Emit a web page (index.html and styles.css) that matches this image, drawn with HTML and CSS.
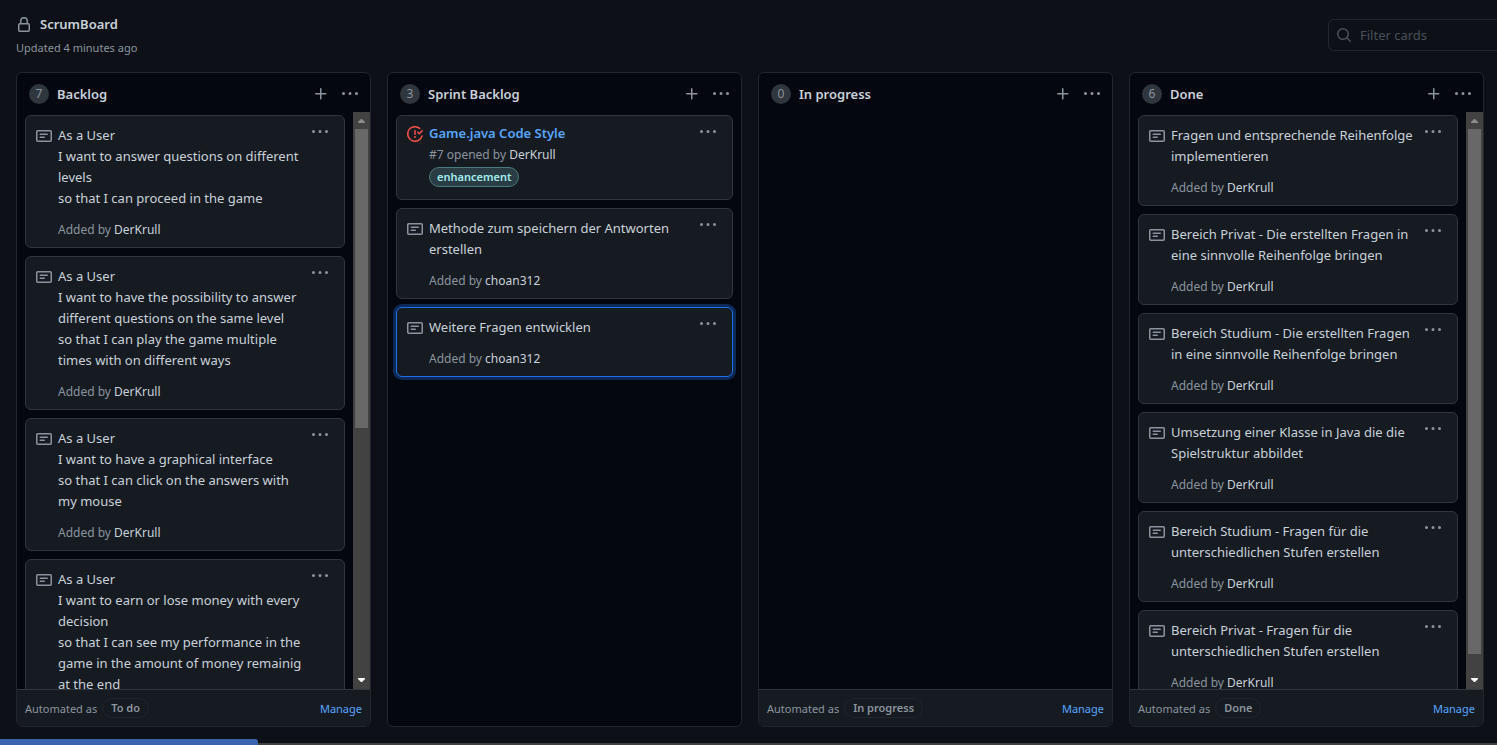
FILE: index.html
```html
<!DOCTYPE html>
<html lang="en">
<head>
<meta charset="utf-8">
<title>ScrumBoard</title>
<link rel="stylesheet" href="styles.css">
</head>
<body>
<svg class="sprite" aria-hidden="true">
  <symbol id="note" viewBox="0 0 16 16"><path fill-rule="evenodd" d="M0 3.75C0 2.784.784 2 1.75 2h12.5c.966 0 1.75.784 1.75 1.75v8.5A1.75 1.75 0 0114.25 14H1.75A1.75 1.75 0 010 12.25v-8.5zm1.75-.25a.25.25 0 00-.25.25v8.5c0 .138.112.25.25.25h12.5a.25.25 0 00.25-.25v-8.5a.25.25 0 00-.25-.25H1.75zM3.5 6.25a.75.75 0 01.75-.75h7a.75.75 0 010 1.5h-7a.75.75 0 01-.75-.75zm.75 2.25a.75.75 0 000 1.5h4a.75.75 0 000-1.5h-4z"/></symbol>
  <symbol id="dots" viewBox="0 0 16 16"><path d="M8 9a1.5 1.5 0 100-3 1.5 1.5 0 000 3zM1.5 9a1.5 1.5 0 100-3 1.5 1.5 0 000 3zm13 0a1.5 1.5 0 100-3 1.5 1.5 0 000 3z"/></symbol>
  <symbol id="plus" viewBox="0 0 16 16"><path d="M7.75 2a.75.75 0 01.75.75V7h4.25a.75.75 0 110 1.5H8.5v4.25a.75.75 0 11-1.5 0V8.5H2.75a.75.75 0 010-1.5H7V2.75A.75.75 0 017.75 2z"/></symbol>
  <symbol id="lock" viewBox="0 0 16 16"><path fill-rule="evenodd" d="M4 4v2h-.25A1.75 1.75 0 002 7.75v5.5c0 .966.784 1.75 1.75 1.75h8.5A1.75 1.75 0 0014 13.25v-5.5A1.75 1.75 0 0012.25 6H12V4a4 4 0 10-8 0zm6.5 2V4a2.5 2.5 0 10-5 0v2h5zM12 7.5h.25a.25.25 0 01.25.25v5.5a.25.25 0 01-.25.25h-8.5a.25.25 0 01-.25-.25v-5.5a.25.25 0 01.25-.25H12z"/></symbol>
  <symbol id="search" viewBox="0 0 16 16"><path fill-rule="evenodd" d="M11.5 7a4.499 4.499 0 11-8.998 0A4.499 4.499 0 0111.5 7zm-.82 4.74a6 6 0 111.06-1.06l3.04 3.04a.75.75 0 11-1.06 1.06l-3.04-3.04z"/></symbol>
  <symbol id="issue" viewBox="0 0 16 16"><path d="M1.5 8a6.5 6.5 0 0110.65-5.003.75.75 0 00.959-1.153 8 8 0 102.592 8.33.75.75 0 10-1.444-.407A6.5 6.5 0 011.5 8zM8 12a1 1 0 100-2 1 1 0 000 2zm0-8a.75.75 0 01.75.75v3.5a.75.75 0 11-1.5 0v-3.5A.75.75 0 018 4zm4.78 4.28l3-3a.75.75 0 00-1.06-1.06l-2.47 2.47-.97-.97a.749.749 0 10-1.06 1.06l1.5 1.5a.75.75 0 001.06 0z"/></symbol>
  <symbol id="up" viewBox="0 0 17 17"><path d="M5 11h7V10l-3-3H8L5 10z"/></symbol>
  <symbol id="down" viewBox="0 0 17 17"><path d="M5 6h7v1L9 10H8L5 7z"/></symbol>
</svg>

<header class="top">
  <div class="project">
    <h1 class="project-name"><svg class="icon"><use href="#lock"/></svg>ScrumBoard</h1>
    <p class="updated">Updated 4 minutes ago</p>
  </div>
  <label class="search"><svg class="icon"><use href="#search"/></svg><input class="search-input" type="text" placeholder="Filter cards" aria-label="Filter cards"></label>
</header>

<main class="board">
  <section class="column">
    <header class="column-head"><span class="count">7</span><h2 class="column-title">Backlog</h2>
      <button class="icon-button" aria-label="Add a note"><svg class="icon"><use href="#plus"/></svg></button>
      <button class="icon-button" aria-label="Column menu"><svg class="icon"><use href="#dots"/></svg></button></header>
    <div class="column-body">
      <div class="cards">
        <article class="card"><svg class="icon"><use href="#note"/></svg><div class="content"><p class="note">As a User<br>I want to answer questions on different<br>levels<br>so that I can proceed in the game</p><p class="meta">Added by <a class="user" href="#">DerKrull</a></p></div><button class="icon-button" aria-label="Card menu"><svg class="icon"><use href="#dots"/></svg></button></article>
        <article class="card"><svg class="icon"><use href="#note"/></svg><div class="content"><p class="note">As a User<br>I want to have the possibility to answer<br>different questions on the same level<br>so that I can play the game multiple<br>times with on different ways</p><p class="meta">Added by <a class="user" href="#">DerKrull</a></p></div><button class="icon-button" aria-label="Card menu"><svg class="icon"><use href="#dots"/></svg></button></article>
        <article class="card"><svg class="icon"><use href="#note"/></svg><div class="content"><p class="note">As a User<br>I want to have a graphical interface<br>so that I can click on the answers with<br>my mouse</p><p class="meta">Added by <a class="user" href="#">DerKrull</a></p></div><button class="icon-button" aria-label="Card menu"><svg class="icon"><use href="#dots"/></svg></button></article>
        <article class="card"><svg class="icon"><use href="#note"/></svg><div class="content"><p class="note">As a User<br>I want to earn or lose money with every<br>decision<br>so that I can see my performance in the<br>game in the amount of money remainig<br>at the end</p></div><button class="icon-button" aria-label="Card menu"><svg class="icon"><use href="#dots"/></svg></button></article>
      </div>
      <div class="scrollbar"><svg class="arrow arrow-off"><use href="#up"/></svg><div class="track"><div class="thumb" style="height:55%"></div></div><svg class="arrow"><use href="#down"/></svg></div>
    </div>
    <footer class="column-foot"><span>Automated as</span><span class="pill">To do</span><a class="manage" href="#">Manage</a></footer>
  </section>

  <section class="column">
    <header class="column-head"><span class="count">3</span><h2 class="column-title">Sprint Backlog</h2>
      <button class="icon-button" aria-label="Add a note"><svg class="icon"><use href="#plus"/></svg></button>
      <button class="icon-button" aria-label="Column menu"><svg class="icon"><use href="#dots"/></svg></button></header>
    <div class="column-body">
      <div class="cards">
        <article class="card card-issue"><svg class="icon icon-closed"><use href="#issue"/></svg><div class="content"><a class="issue-title" href="#">Game.java Code Style</a><p class="issue-meta">#7 opened by <a class="user" href="#">DerKrull</a></p><span class="label">enhancement</span></div><button class="icon-button" aria-label="Card menu"><svg class="icon"><use href="#dots"/></svg></button></article>
        <article class="card"><svg class="icon"><use href="#note"/></svg><div class="content"><p class="note">Methode zum speichern der Antworten<br>erstellen</p><p class="meta">Added by <a class="user" href="#">choan312</a></p></div><button class="icon-button" aria-label="Card menu"><svg class="icon"><use href="#dots"/></svg></button></article>
        <article class="card card-focus"><svg class="icon"><use href="#note"/></svg><div class="content"><p class="note">Weitere Fragen entwicklen</p><p class="meta">Added by <a class="user" href="#">choan312</a></p></div><button class="icon-button" aria-label="Card menu"><svg class="icon"><use href="#dots"/></svg></button></article>
      </div>
    </div>
  </section>

  <section class="column">
    <header class="column-head"><span class="count">0</span><h2 class="column-title">In progress</h2>
      <button class="icon-button" aria-label="Add a note"><svg class="icon"><use href="#plus"/></svg></button>
      <button class="icon-button" aria-label="Column menu"><svg class="icon"><use href="#dots"/></svg></button></header>
    <div class="column-body"></div>
    <footer class="column-foot"><span>Automated as</span><span class="pill">In progress</span><a class="manage" href="#">Manage</a></footer>
  </section>

  <section class="column">
    <header class="column-head"><span class="count">6</span><h2 class="column-title">Done</h2>
      <button class="icon-button" aria-label="Add a note"><svg class="icon"><use href="#plus"/></svg></button>
      <button class="icon-button" aria-label="Column menu"><svg class="icon"><use href="#dots"/></svg></button></header>
    <div class="column-body">
      <div class="cards">
        <article class="card"><svg class="icon"><use href="#note"/></svg><div class="content"><p class="note">Fragen und entsprechende Reihenfolge<br>implementieren</p><p class="meta">Added by <a class="user" href="#">DerKrull</a></p></div><button class="icon-button" aria-label="Card menu"><svg class="icon"><use href="#dots"/></svg></button></article>
        <article class="card"><svg class="icon"><use href="#note"/></svg><div class="content"><p class="note">Bereich Privat - Die erstellten Fragen in<br>eine sinnvolle Reihenfolge bringen</p><p class="meta">Added by <a class="user" href="#">DerKrull</a></p></div><button class="icon-button" aria-label="Card menu"><svg class="icon"><use href="#dots"/></svg></button></article>
        <article class="card"><svg class="icon"><use href="#note"/></svg><div class="content"><p class="note">Bereich Studium - Die erstellten Fragen<br>in eine sinnvolle Reihenfolge bringen</p><p class="meta">Added by <a class="user" href="#">DerKrull</a></p></div><button class="icon-button" aria-label="Card menu"><svg class="icon"><use href="#dots"/></svg></button></article>
        <article class="card"><svg class="icon"><use href="#note"/></svg><div class="content"><p class="note">Umsetzung einer Klasse in Java die die<br>Spielstruktur abbildet</p><p class="meta">Added by <a class="user" href="#">DerKrull</a></p></div><button class="icon-button" aria-label="Card menu"><svg class="icon"><use href="#dots"/></svg></button></article>
        <article class="card"><svg class="icon"><use href="#note"/></svg><div class="content"><p class="note">Bereich Studium - Fragen für die<br>unterschiedlichen Stufen erstellen</p><p class="meta">Added by <a class="user" href="#">DerKrull</a></p></div><button class="icon-button" aria-label="Card menu"><svg class="icon"><use href="#dots"/></svg></button></article>
        <article class="card"><svg class="icon"><use href="#note"/></svg><div class="content"><p class="note">Bereich Privat - Fragen für die<br>unterschiedlichen Stufen erstellen</p><p class="meta">Added by <a class="user" href="#">DerKrull</a></p></div><button class="icon-button" aria-label="Card menu"><svg class="icon"><use href="#dots"/></svg></button></article>
      </div>
      <div class="scrollbar"><svg class="arrow arrow-off"><use href="#up"/></svg><div class="track"><div class="thumb" style="height:96.7%"></div></div><svg class="arrow"><use href="#down"/></svg></div>
    </div>
    <footer class="column-foot"><span>Automated as</span><span class="pill">Done</span><a class="manage" href="#">Manage</a></footer>
  </section>
</main>

<div class="bottom-bar"><div class="bottom-fill"></div><div class="bottom-track"></div></div>
</body>
</html>
```

FILE: styles.css
```css
* { box-sizing: border-box; }
body {
  margin: 0;
  height: 100vh;
  display: flex;
  flex-direction: column;
  overflow: hidden;
  background: #0d1117;
  color: #c9d1d9;
  font: 13px/21px "Noto Sans", "Open Sans", sans-serif;
}
h1, h2, p { margin: 0; }
a { color: #58a6ff; text-decoration: none; }
.sprite { display: none; }
.icon { width: 16px; height: 16px; flex: none; display: block; fill: #8b949e; }
.icon-button { flex: none; padding: 0; border: 0; background: none; }

.top { flex: none; height: 72px; display: flex; justify-content: space-between; align-items: flex-start; padding-left: 16px; }
.project { padding-top: 14px; }
.project-name { display: flex; align-items: center; gap: 8px; font-size: 13px; font-weight: 600; line-height: 21px; }
.updated { margin-top: 3px; font-size: 11px; line-height: 20px; color: #8b949e; }
.search {
  margin-top: 19px;
  width: 169px;
  height: 32px;
  display: flex;
  align-items: center;
  gap: 8px;
  padding-left: 7px;
  border: 1px solid #21262d;
  border-right: 0;
  border-radius: 6px 0 0 6px;
}
.search .icon { fill: #484f58; }
.search-input { flex: 1; min-width: 0; padding: 0; border: 0; outline: 0; background: none; color: #c9d1d9; font: inherit; }
.search-input::placeholder { color: #484f58; opacity: 1; }

.board { flex: 1; min-height: 0; display: grid; grid-template-columns: repeat(4, 1fr); gap: 16px; padding: 0 13px 12px 16px; }
.column {
  min-width: 0;
  min-height: 0;
  display: flex;
  flex-direction: column;
  overflow: hidden;
  background: #05070f;
  border: 1px solid #21262d;
  border-radius: 6px;
}
.column-head { flex: none; height: 39px; display: flex; align-items: center; padding: 2px 12px 0; }
.column-head .icon-button { margin-left: 13px; }
.count { width: 20px; height: 20px; border-radius: 50%; background: #30363d; color: #8b949e; font-size: 12px; line-height: 20px; text-align: center; }
.column-title { flex: 1; padding: 2px 0 0 8px; font-size: 13px; font-weight: 600; }
.column-body { flex: 1; min-height: 0; display: flex; overflow: hidden; }
.cards { flex: 1; min-width: 0; display: flex; flex-direction: column; gap: 8px; padding: 3px 8px 0; }

.card { flex: none; display: flex; align-items: flex-start; padding: 8px 16px 7px 10px; background: #161b22; border: 1px solid #30363d; border-radius: 6px; }
.card > .icon { margin-top: 4px; }
.content { flex: 1; min-width: 0; padding: 1px 0 0 6px; white-space: nowrap; }
.meta { margin-top: 10px; }
.meta, .issue-meta { font-size: 12px; color: #8b949e; }
.user { color: #c9d1d9; }
.card-issue { padding-bottom: 12px; }
.card-issue > .icon { margin-top: 2px; }
.card-issue .content { padding-top: 0; margin-top: -1px; }
.icon-closed { fill: #f85149; }
.issue-title { display: block; font-weight: 600; }
.label {
  display: block;
  width: max-content;
  margin-top: 2px;
  padding: 0 7px;
  border: 1px solid #4b7b7d;
  border-radius: 10px;
  background: #2b3d44;
  color: #a2eeef;
  font-size: 11px;
  font-weight: 600;
  line-height: 18px;
}
.card-focus { border-color: #1f6feb; box-shadow: 0 0 0 3px #0c2957; }

.scrollbar { flex: none; width: 17px; display: flex; flex-direction: column; background: #424242; }
.arrow { width: 17px; height: 17px; flex: none; display: block; fill: #fff; }
.arrow-off { fill: #8b8b8b; }
.track { flex: 1; padding: 0 2px; }
.thumb { background: #686868; }

.column-foot { flex: none; height: 37px; display: flex; align-items: center; padding: 0 8px; background: #161b22; border-top: 1px solid #30363d; font-size: 11px; color: #8b949e; }
.pill { margin-left: 5px; padding: 0 8px; border: 1px solid #21262d; border-radius: 10px; font-weight: 600; line-height: 18px; }
.manage { margin-left: auto; }

.bottom-bar { flex: none; height: 6px; display: flex; align-items: flex-end; }
.bottom-fill { width: 258px; height: 6px; background: #3b64b0; border-radius: 0 3px 0 0; }
.bottom-track { flex: 1; height: 2px; background: #424242; }
```
